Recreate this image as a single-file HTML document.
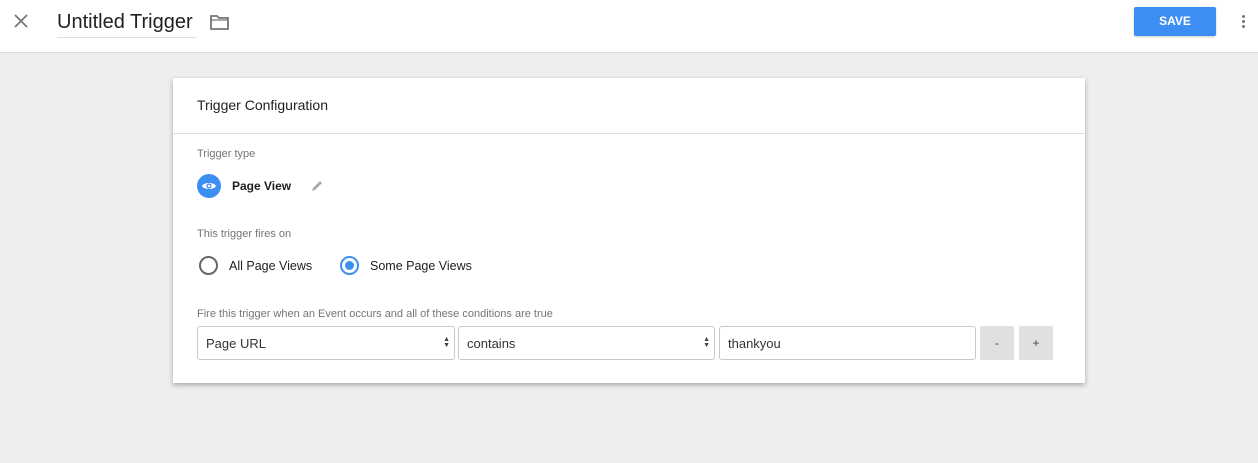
<!DOCTYPE html>
<html><head><style>
*{box-sizing:border-box;margin:0;padding:0}
body{width:1258px;height:463px;background:#eeeeee;font-family:"Liberation Sans",sans-serif;position:relative;overflow:hidden;color:#212121}
.top{position:absolute;left:0;top:0;width:1258px;height:53px;background:#fff;border-bottom:1px solid #ddd}
.abs{position:absolute}
.card{position:absolute;left:173px;top:78px;width:912px;height:305px;background:#fff;box-shadow:0 2px 5px rgba(0,0,0,.3)}
.lbl{position:absolute;font-size:11px;color:#757575}
.sel{position:absolute;top:248px;height:34px;border:1px solid #c8c8c8;border-radius:3px;font-size:13px;color:#333;padding:9px 8px}
.btn{position:absolute;top:248px;width:34px;height:34px;background:#e0e0e0;border-radius:2px;font-size:12px;text-align:center;line-height:34px;color:#444}
.arr{position:absolute;right:4px;top:10px;font-size:7px;line-height:6px;color:#444}
</style></head><body>
<div class="top">
<svg class="abs" style="left:14px;top:14px" width="14" height="14" viewBox="0 0 14 14"><path d="M1 1L13 13M13 1L1 13" stroke="#757575" stroke-width="1.8"/></svg>
<div class="abs" style="left:57px;top:11px;font-size:20px;color:#212121">Untitled Trigger</div>
<div class="abs" style="left:57px;top:37px;width:139px;height:1px;background:#ddd"></div>
<svg class="abs" style="left:209px;top:14px" width="22" height="18" viewBox="0 0 22 18"><path d="M2 2h6l2 2h9v11H2z" fill="none" stroke="#757575" stroke-width="1.8"/><path d="M2 6h17" stroke="#757575" stroke-width="1.2"/></svg>
<div class="abs" style="left:1134px;top:7px;width:82px;height:29px;background:#3c8ef3;border-radius:2px;color:#fff;font-size:12px;font-weight:bold;text-align:center;line-height:29px;box-shadow:0 1px 2px rgba(0,0,0,.2)">SAVE</div>
<div class="abs" style="left:1242px;top:15px;width:3px;height:3px;border-radius:2px;background:#757575;box-shadow:0 5px 0 #757575,0 10px 0 #757575"></div>
</div>
<div class="card">
<div class="abs" style="left:24px;top:19px;font-size:14px">Trigger Configuration</div>
<div class="abs" style="left:0;top:55px;width:912px;height:1px;background:#ddd"></div>
<div class="lbl" style="left:24px;top:70px">Trigger type</div>
<div class="abs" style="left:24px;top:96px;width:24px;height:24px;border-radius:12px;background:#3c8ef3"></div>
<svg class="abs" style="left:28px;top:101px" width="16" height="14" viewBox="0 0 16 14"><path d="M1 7C3 3 13 3 15 7C13 11 3 11 1 7Z" fill="#fff"/><circle cx="8" cy="7" r="2.6" fill="#3c8ef3"/><circle cx="8" cy="7" r="1.3" fill="#fff"/></svg>
<div class="abs" style="left:59px;top:101px;font-size:12px;font-weight:bold">Page View</div>
<svg class="abs" style="left:138px;top:101px" width="13" height="13" viewBox="0 0 13 13"><path d="M1 12l1-3 7-7 2 2-7 7z" fill="#aaa"/></svg>
<div class="lbl" style="left:24px;top:150px">This trigger fires on</div>
<div class="abs" style="left:26px;top:178px;width:19px;height:19px;border-radius:50%;border:2px solid #666"></div>
<div class="abs" style="left:56px;top:181px;font-size:12.5px">All Page Views</div>
<div class="abs" style="left:167px;top:178px;width:19px;height:19px;border-radius:50%;border:2px solid #3c8ef3"></div>
<div class="abs" style="left:172px;top:183px;width:9px;height:9px;border-radius:50%;background:#3c8ef3"></div>
<div class="abs" style="left:197px;top:181px;font-size:12.5px">Some Page Views</div>
<div class="lbl" style="left:24px;top:230px">Fire this trigger when an Event occurs and all of these conditions are true</div>
<div class="sel" style="left:24px;width:258px">Page URL<div class="arr">▲<br>▼</div></div>
<div class="sel" style="left:285px;width:257px">contains<div class="arr">▲<br>▼</div></div>
<div class="sel" style="left:546px;width:257px">thankyou</div>
<div class="btn" style="left:807px">-</div>
<div class="btn" style="left:846px">+</div>
</div>
</body></html>
